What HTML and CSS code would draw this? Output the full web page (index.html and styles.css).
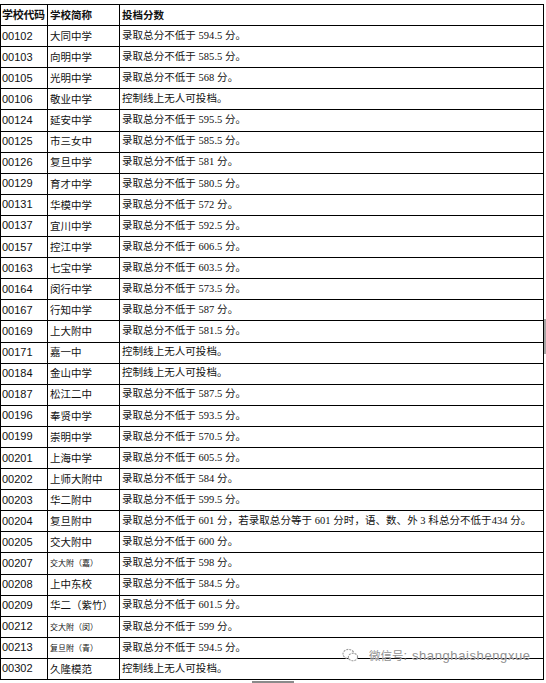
FILE: index.html
```html
<!DOCTYPE html>
<html lang="zh">
<head>
<meta charset="utf-8">
<link rel="stylesheet" href="styles.css">
</head>
<body>
<div class="page">
<table class="score">
<colgroup><col class="c1"><col class="c2"><col class="c3"></colgroup>
<thead>
<tr><th>学校代码</th><th>学校简称</th><th>投档分数</th></tr>
</thead>
<tbody>
<tr><td>00102</td><td>大同中学</td><td>录取总分不低于 594.5 分。</td></tr>
<tr><td>00103</td><td>向明中学</td><td>录取总分不低于 585.5 分。</td></tr>
<tr><td>00105</td><td>光明中学</td><td>录取总分不低于 568 分。</td></tr>
<tr><td>00106</td><td>敬业中学</td><td>控制线上无人可投档。</td></tr>
<tr><td>00124</td><td>延安中学</td><td>录取总分不低于 595.5 分。</td></tr>
<tr><td>00125</td><td>市三女中</td><td>录取总分不低于 585.5 分。</td></tr>
<tr><td>00126</td><td>复旦中学</td><td>录取总分不低于 581 分。</td></tr>
<tr><td>00129</td><td>育才中学</td><td>录取总分不低于 580.5 分。</td></tr>
<tr><td>00131</td><td>华模中学</td><td>录取总分不低于 572 分。</td></tr>
<tr><td>00137</td><td>宜川中学</td><td>录取总分不低于 592.5 分。</td></tr>
<tr><td>00157</td><td>控江中学</td><td>录取总分不低于 606.5 分。</td></tr>
<tr><td>00163</td><td>七宝中学</td><td>录取总分不低于 603.5 分。</td></tr>
<tr><td>00164</td><td>闵行中学</td><td>录取总分不低于 573.5 分。</td></tr>
<tr><td>00167</td><td>行知中学</td><td>录取总分不低于 587 分。</td></tr>
<tr><td>00169</td><td>上大附中</td><td>录取总分不低于 581.5 分。</td></tr>
<tr><td>00171</td><td>嘉一中</td><td>控制线上无人可投档。</td></tr>
<tr><td>00184</td><td>金山中学</td><td>控制线上无人可投档。</td></tr>
<tr><td>00187</td><td>松江二中</td><td>录取总分不低于 587.5 分。</td></tr>
<tr><td>00196</td><td>奉贤中学</td><td>录取总分不低于 593.5 分。</td></tr>
<tr><td>00199</td><td>崇明中学</td><td>录取总分不低于 570.5 分。</td></tr>
<tr><td>00201</td><td>上海中学</td><td>录取总分不低于 605.5 分。</td></tr>
<tr><td>00202</td><td>上师大附中</td><td>录取总分不低于 584 分。</td></tr>
<tr><td>00203</td><td>华二附中</td><td>录取总分不低于 599.5 分。</td></tr>
<tr><td>00204</td><td>复旦附中</td><td>录取总分不低于 601 分，若录取总分等于 601 分时，语、数、外 3 科总分不低于434 分。</td></tr>
<tr><td>00205</td><td>交大附中</td><td>录取总分不低于 600 分。</td></tr>
<tr><td>00207</td><td class="small">交大附（嘉）</td><td>录取总分不低于 598 分。</td></tr>
<tr><td>00208</td><td>上中东校</td><td>录取总分不低于 584.5 分。</td></tr>
<tr><td>00209</td><td>华二（紫竹）</td><td>录取总分不低于 601.5 分。</td></tr>
<tr><td>00212</td><td class="small">交大附（闵）</td><td>录取总分不低于 599 分。</td></tr>
<tr><td>00213</td><td class="small">复旦附（青）</td><td>录取总分不低于 594.5 分。</td></tr>
<tr><td>00302</td><td>久隆模范</td><td>控制线上无人可投档。</td></tr>
</tbody>
</table>
<div class="watermark">
<svg class="wm-icon" width="17" height="15" viewBox="0 0 17 15"><ellipse cx="6.5" cy="6" rx="5.5" ry="4.6" fill="none" stroke="#999" stroke-width="1.1" stroke-dasharray="2 1"/><ellipse cx="11" cy="9" rx="4.6" ry="3.8" fill="#fff" stroke="#999" stroke-width="1.1" stroke-dasharray="2 1"/></svg>
<span class="wm-cn">微信号</span><span class="wm-en">: shanghaishengxue</span>
</div>
<div class="thumb-h"></div>
<div class="thumb-v"></div>
</div>
</body>
</html>
```
FILE: styles.css
```css
html, body {
  margin: 0;
  padding: 0;
  background: #fff;
}
.page {
  position: relative;
  width: 546px;
  height: 683px;
  overflow: hidden;
  padding-top: 4px;
  box-sizing: border-box;
}
.score {
  border-collapse: collapse;
  table-layout: fixed;
  width: 543px;
  color: #111;
  font-family: "Liberation Serif", "Noto Sans CJK SC", serif;
  font-size: 10.5px;
}
.c1 { width: 47px; }
.c2 { width: 72px; }
.c3 { width: 424px; }
.score th, .score td {
  border: 1px solid #000;
  height: 20.1px;
  padding: 0 0 0 2px;
  line-height: 1;
  text-align: left;
  vertical-align: middle;
  white-space: nowrap;
  overflow: hidden;
}
.score th {
  font-family: "Liberation Sans", "Noto Sans CJK SC", sans-serif;
  font-weight: bold;
  font-size: 10.5px;
}
.score th:first-child {
  padding-left: 1px;
  font-size: 11px;
  letter-spacing: -0.3px;
}
.score td:first-child {
  font-family: "Liberation Sans", sans-serif;
  font-size: 11px;
  padding-left: 1px;
}
.score td:nth-child(2) {
  font-family: "Noto Sans CJK SC", sans-serif;
  font-size: 10.5px;
}
.score td.small {
  font-size: 8px;
}
.score td:nth-child(3) {
  font-size: 10.5px;
  letter-spacing: 0.05px;
}
.watermark {
  position: absolute;
  left: 342px;
  top: 647px;
  display: flex;
  align-items: center;
  gap: 10px;
  color: #909090;
  font-family: "Liberation Sans", "Noto Sans CJK SC", sans-serif;
  text-shadow: 0 0 1px #fff;
  white-space: nowrap;
}
.wm-icon {
  display: block;
}
.wm-cn {
  font-family: "Noto Sans CJK SC", sans-serif;
  font-size: 11.5px;
}
.wm-en {
  font-size: 13px;
  letter-spacing: 0.6px;
  margin-left: -10px;
}
.thumb-h {
  position: absolute;
  left: 252px;
  top: 681px;
  width: 42px;
  height: 2px;
  background: #8a8a8a;
}
.thumb-v {
  position: absolute;
  left: 544px;
  top: 319px;
  width: 2px;
  height: 35px;
  background: #a5a5a5;
}
```
